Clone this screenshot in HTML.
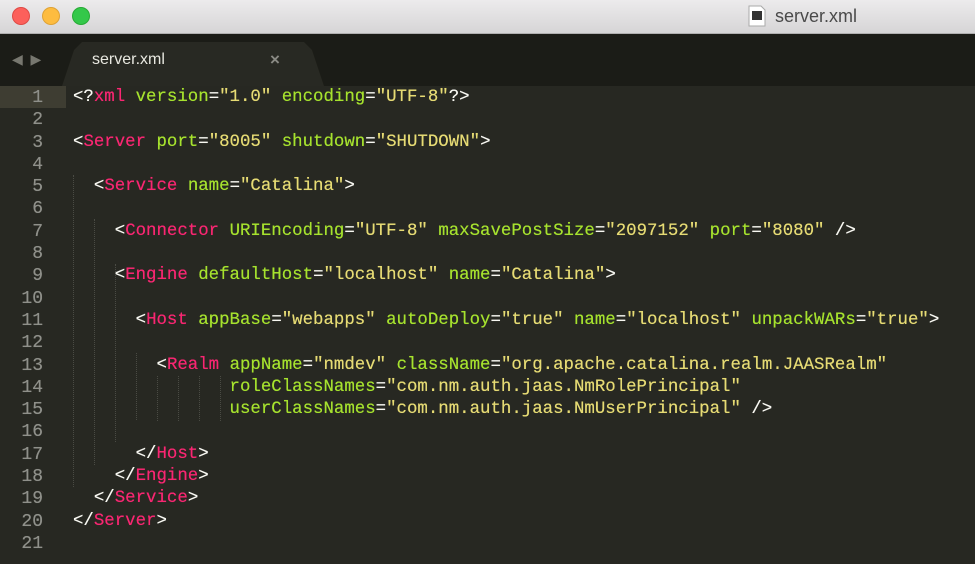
<!DOCTYPE html><html><head><style>
body{margin:0;width:975px;height:564px;overflow:hidden;background:#272822;font-family:"Liberation Sans",sans-serif}
#title{position:absolute;left:0;top:0;width:975px;height:33px;background:linear-gradient(#ecebec,#d6d5d6);border-bottom:1px solid #b0afb0}
.dot{position:absolute;top:7px;width:17px;height:17px;border-radius:50%}
#tabbar{position:absolute;left:0;top:34px;width:975px;height:52px;background:#1b1c17}
#tab{position:absolute;left:62px;top:42px;width:262px;height:44px;background:#282923;border-radius:12px 12px 0 0;clip-path:polygon(0 100%,12px 8px,20px 0,242px 0,250px 8px,100% 100%)}
#code{position:absolute;left:0;top:87px;width:975px;font-family:"Liberation Mono",monospace;font-size:17.4px;line-height:22.3px;color:#f8f8f2;text-shadow:0 0 0.4px currentColor}
.l{position:relative;height:22.3px;white-space:pre}
.n{position:absolute;left:0;width:43px;text-align:right;color:#8f908a;font-size:18px}
.c{position:absolute;left:73px}
.t{color:#f92672}.a{color:#a6e22e}.s{color:#e6db74}
.g{position:absolute;width:0;border-left:1px dotted #4a4b44}
</style></head><body>
<div id="title">
<div class="dot" style="left:12px;background:#fc605b;border:1px solid #de4a45;width:16px;height:16px"></div>
<div class="dot" style="left:42px;background:#fdbc40;border:1px solid #dea236;width:16px;height:16px"></div>
<div class="dot" style="left:72px;background:#34c84a;border:1px solid #27aa35;width:16px;height:16px"></div>
<svg style="position:absolute;left:748px;top:5px" width="18" height="22"><path d="M1 1h12l4 4v16H1z" fill="#fff" stroke="#aaa"/><rect x="4" y="6" width="10" height="9" fill="#333"/></svg>
<div style="position:absolute;left:775px;top:6px;font-size:18px;color:#4a4a4a">server.xml</div>
</div>
<div id="tabbar"></div>
<div id="tab"></div>
<div style="position:absolute;left:12px;top:51px;color:#77776f;font-size:14px">◀&nbsp;&nbsp;▶</div>
<div style="position:absolute;left:92px;top:51px;color:#e8e8e0;font-size:16px">server.xml</div>
<div style="position:absolute;left:270px;top:50px;color:#8a8a84;font-size:17px;font-weight:bold">×</div>
<div style="position:absolute;left:0;top:86px;width:66px;height:22px;background:#3e3d32"></div>
<div class="g" style="left:73px;top:175px;height:312px"></div>
<div class="g" style="left:94px;top:219px;height:246px"></div>
<div class="g" style="left:115px;top:264px;height:178px"></div>
<div class="g" style="left:136px;top:353px;height:67px"></div>
<div class="g" style="left:157px;top:376px;height:45px"></div>
<div class="g" style="left:178px;top:376px;height:45px"></div>
<div class="g" style="left:199px;top:376px;height:45px"></div>
<div class="g" style="left:220px;top:376px;height:45px"></div>
<div id="code">
<div class="l"><span class="n">1</span><span class="c">&lt;?<span class="t">xml</span> <span class="a">version</span>=<span class="s">"1.0"</span> <span class="a">encoding</span>=<span class="s">"UTF-8"</span>?&gt;</span></div>
<div class="l"><span class="n">2</span></div>
<div class="l"><span class="n">3</span><span class="c">&lt;<span class="t">Server</span> <span class="a">port</span>=<span class="s">"8005"</span> <span class="a">shutdown</span>=<span class="s">"SHUTDOWN"</span>&gt;</span></div>
<div class="l"><span class="n">4</span></div>
<div class="l"><span class="n">5</span><span class="c">  &lt;<span class="t">Service</span> <span class="a">name</span>=<span class="s">"Catalina"</span>&gt;</span></div>
<div class="l"><span class="n">6</span></div>
<div class="l"><span class="n">7</span><span class="c">    &lt;<span class="t">Connector</span> <span class="a">URIEncoding</span>=<span class="s">"UTF-8"</span> <span class="a">maxSavePostSize</span>=<span class="s">"2097152"</span> <span class="a">port</span>=<span class="s">"8080"</span> /&gt;</span></div>
<div class="l"><span class="n">8</span></div>
<div class="l"><span class="n">9</span><span class="c">    &lt;<span class="t">Engine</span> <span class="a">defaultHost</span>=<span class="s">"localhost"</span> <span class="a">name</span>=<span class="s">"Catalina"</span>&gt;</span></div>
<div class="l"><span class="n">10</span></div>
<div class="l"><span class="n">11</span><span class="c">      &lt;<span class="t">Host</span> <span class="a">appBase</span>=<span class="s">"webapps"</span> <span class="a">autoDeploy</span>=<span class="s">"true"</span> <span class="a">name</span>=<span class="s">"localhost"</span> <span class="a">unpackWARs</span>=<span class="s">"true"</span>&gt;</span></div>
<div class="l"><span class="n">12</span></div>
<div class="l"><span class="n">13</span><span class="c">        &lt;<span class="t">Realm</span> <span class="a">appName</span>=<span class="s">"nmdev"</span> <span class="a">className</span>=<span class="s">"org.apache.catalina.realm.JAASRealm"</span></span></div>
<div class="l"><span class="n">14</span><span class="c">               <span class="a">roleClassNames</span>=<span class="s">"com.nm.auth.jaas.NmRolePrincipal"</span></span></div>
<div class="l"><span class="n">15</span><span class="c">               <span class="a">userClassNames</span>=<span class="s">"com.nm.auth.jaas.NmUserPrincipal"</span> /&gt;</span></div>
<div class="l"><span class="n">16</span></div>
<div class="l"><span class="n">17</span><span class="c">      &lt;/<span class="t">Host</span>&gt;</span></div>
<div class="l"><span class="n">18</span><span class="c">    &lt;/<span class="t">Engine</span>&gt;</span></div>
<div class="l"><span class="n">19</span><span class="c">  &lt;/<span class="t">Service</span>&gt;</span></div>
<div class="l"><span class="n">20</span><span class="c">&lt;/<span class="t">Server</span>&gt;</span></div>
<div class="l"><span class="n">21</span></div>
</div>
</body></html>
